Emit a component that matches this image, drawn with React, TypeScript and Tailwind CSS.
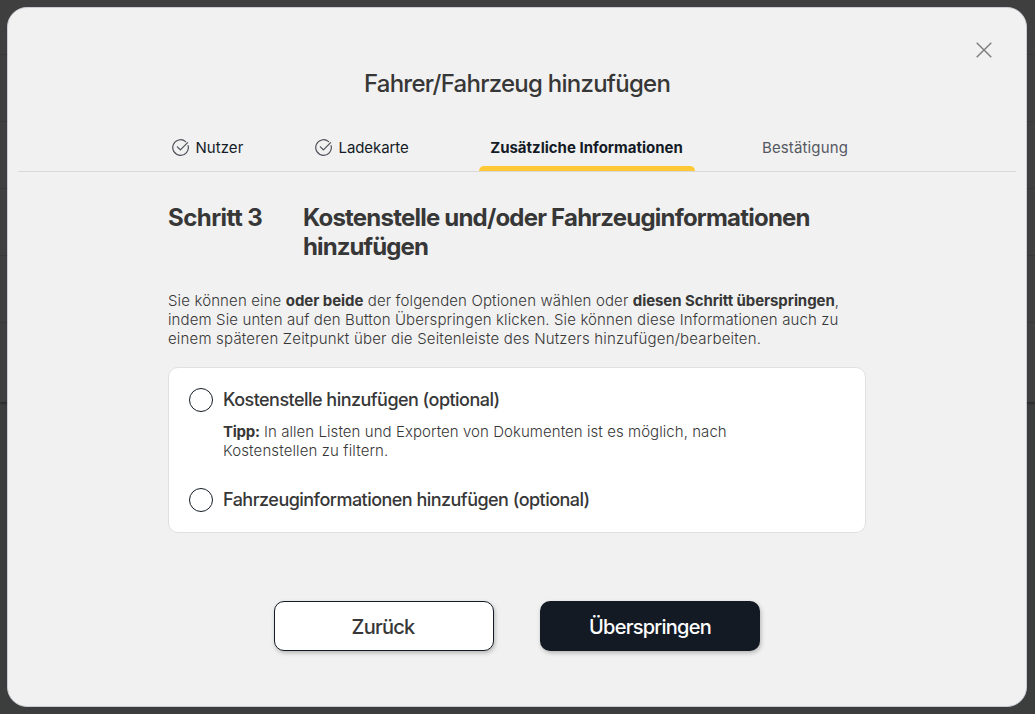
import React from "react"

const CheckIcon = () => {
  return (
    <svg
      width="17"
      height="17"
      viewBox="0 0 17 17"
      fill="none"
      stroke="#4d5058"
      strokeWidth="1.2"
      strokeLinecap="round"
      strokeLinejoin="round"
      className="mb-px shrink-0"
    >
      <path d="M16.1 6.6A7.8 7.8 0 1 1 13.6 2.6" />
      <path d="M5.4 7.8L8.4 10.9L15.6 3.6" />
    </svg>
  )
}

const Backdrop = () => {
  return (
    <div className="absolute inset-0 flex flex-col bg-[#3c3e3d]">
      <div className="h-[55px] shrink-0 border-b border-[#383838] bg-[#3f3f3f]" />
      <div className="h-[67px] shrink-0 border-b border-[#383838] bg-[#3f3f3f]" />
      <div className="h-[67px] shrink-0 border-b border-[#383838] bg-[#3f3f3f]" />
      <div className="h-[67px] shrink-0 border-b border-[#383838] bg-[#3f3f3f]" />
      <div className="h-[67px] shrink-0 border-b border-[#383838] bg-[#3f3f3f]" />
      <div className="h-[79px] shrink-0 bg-[#3f3f3f] shadow-[0_2px_2px_rgba(0,0,0,0.3)]" />
    </div>
  )
}

const Steps = () => {
  return (
    <div className="mx-[10px] flex h-12 border-b border-[#d9d9d9] text-[15px] text-[#141b26]">
      <div className="ml-[154px] flex h-12 w-[143px] items-center gap-[6.5px]">
        <CheckIcon />
        <span className="tracking-[0.05px]">Nutzer</span>
      </div>
      <div className="flex h-12 w-[164px] items-center gap-[6.5px]">
        <CheckIcon />
        <span className="tracking-[-0.08px]">Ladekarte</span>
      </div>
      <div className="flex h-[47px] w-[216px] flex-col items-center justify-between">
        <span className="pt-[13px] pr-px leading-[22px] font-bold">
          Zusätzliche Informationen
        </span>
        <div className="h-[5px] w-full rounded-t-[5px] bg-[#ffc935]" />
      </div>
      <div className="ml-[67px] flex h-12 items-center text-[#555861]">
        <span className="tracking-[0.13px]">Bestätigung</span>
      </div>
    </div>
  )
}

const App = () => {
  return (
    <div className="relative h-[714px] w-[1035px] overflow-hidden font-[Inter,sans-serif] text-[#373737]">
      <Backdrop />
      <div className="relative mt-[7px] ml-[7px] flex h-[700px] w-[1020px] flex-col rounded-[20px] border border-[#c9cdd2] bg-[#f1f1f1] whitespace-nowrap">
        <div className="flex h-[58px] items-end justify-end pr-[34px]">
          <button aria-label="Schließen" className="mb-2">
            <svg
              width="16"
              height="16"
              viewBox="0 0 16 16"
              fill="none"
              stroke="#7c7c7c"
              strokeWidth="1.4"
            >
              <path d="M0.7 0.7L15.3 15.3M15.3 0.7L0.7 15.3" />
            </svg>
          </button>
        </div>
        <h2 className="h-[58px] text-center text-2xl leading-9 font-medium tracking-[-0.74px]">
          Fahrer/Fahrzeug hinzufügen
        </h2>
        <Steps />

        <div className="mx-[160px] mt-[31px] flex text-2xl leading-[29px] font-bold">
          <h3 className="w-[135px] tracking-[-0.55px]">Schritt 3</h3>
          <h3 className="tracking-[-0.79px]">
            Kostenstelle und/oder Fahrzeuginformationen
            <br />
            <span className="tracking-[-0.9px]">hinzufügen</span>
          </h3>
        </div>

        <p className="mx-[160px] mt-[30px] text-[15px] leading-[19px] font-[350]">
          <span className="tracking-[0.13px]">
            Sie können eine <b className="tracking-[-0.05px]">oder beide</b> der
            folgenden Optionen wählen oder{" "}
            <b className="tracking-[-0.08px]">diesen Schritt überspringen</b>,
          </span>
          <br />
          <span className="tracking-[0.12px]">
            indem Sie unten auf den Button Überspringen klicken. Sie können
            diese Informationen auch zu
          </span>
          <br />
          <span className="tracking-[0.18px]">
            einem späteren Zeitpunkt über die Seitenleiste des Nutzers
            hinzufügen/bearbeiten.
          </span>
        </p>

        <div className="mt-[19px] ml-[160px] h-[166px] w-[698px] rounded-[10px] border border-[#e0e0e0] bg-white pt-5 pl-5">
          <div className="flex items-center gap-[10px]">
            <div className="h-6 w-6 rounded-full border border-[#141b26]" />
            <span className="text-lg leading-6 font-medium tracking-[-0.53px]">
              Kostenstelle hinzufügen (optional)
            </span>
          </div>
          <p className="mt-[10px] ml-[34px] text-[15px] leading-[19px] font-[350]">
            <span className="tracking-[0.06px]">
              <b className="tracking-[-0.25px]">Tipp:</b> In allen Listen und
              Exporten von Dokumenten ist es möglich, nach
            </span>
            <br />
            <span className="tracking-[0.12px]">Kostenstellen zu filtern.</span>
          </p>
          <div className="mt-7 flex items-center gap-[10px]">
            <div className="h-6 w-6 rounded-full border border-[#141b26]" />
            <span className="text-lg leading-6 font-medium tracking-[-0.53px]">
              Fahrzeuginformationen hinzufügen (optional)
            </span>
          </div>
        </div>

        <div className="mt-[68px] ml-[266px] flex gap-[46px] text-xl font-medium tracking-[-0.75px]">
          <button className="h-[50px] w-[220px] rounded-[10px] border border-[#141b26] bg-white pt-px pr-[2px] shadow-[1px_2px_4px_rgba(0,0,0,0.25)]">
            Zurück
          </button>
          <button className="h-[50px] w-[220px] rounded-[10px] bg-[#131a24] pt-px text-white shadow-[1px_2px_4px_rgba(0,0,0,0.25)]">
            Überspringen
          </button>
        </div>
      </div>
    </div>
  )
}

export default App
